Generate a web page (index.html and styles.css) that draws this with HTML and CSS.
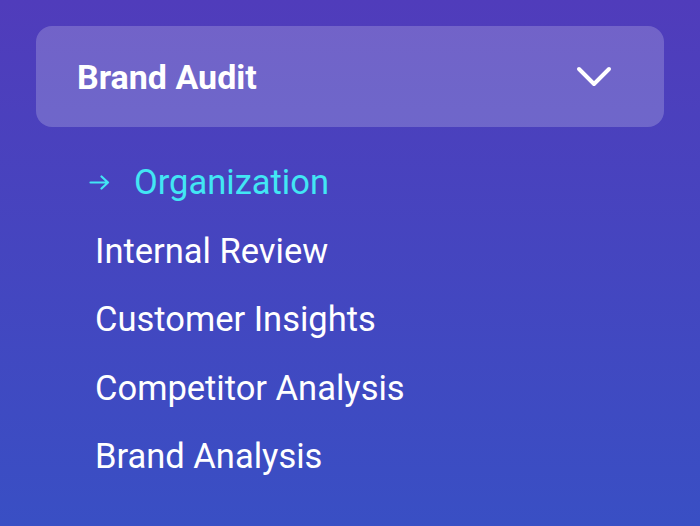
FILE: index.html
```html
<!DOCTYPE html>
<html lang="en">
<head>
<meta charset="utf-8">
<title>Brand Audit</title>
<link rel="stylesheet" href="styles.css">
</head>
<body>
<nav class="menu">
  <div class="menu-header">
    <span class="menu-title">Brand Audit</span>
    <svg class="chevron" width="38" height="24" viewBox="0 0 38 24" aria-hidden="true">
      <polyline points="4,4 19,19 34,4" fill="none" stroke="#ffffff" stroke-width="4" stroke-linecap="round" stroke-linejoin="round"/>
    </svg>
  </div>
  <ul class="menu-list">
    <li class="menu-item active">
      <svg class="arrow" width="21" height="15" viewBox="0 0 21 15" aria-hidden="true">
        <path d="M1.5 7.5 H19 M12.5 1.5 L19 7.5 L12.5 13.5" fill="none" stroke="#42e6f4" stroke-width="2.2" stroke-linecap="round" stroke-linejoin="round"/>
      </svg>
      <span>Organization</span>
    </li>
    <li class="menu-item"><span>Internal Review</span></li>
    <li class="menu-item"><span>Customer Insights</span></li>
    <li class="menu-item"><span>Competitor Analysis</span></li>
    <li class="menu-item"><span>Brand Analysis</span></li>
  </ul>
</nav>
</body>
</html>
```

FILE: styles.css
```css
html, body {
  margin: 0;
  padding: 0;
  height: 100%;
}

body {
  background: linear-gradient(180deg, #503cbb 0%, #394fc4 100%);
  font-family: Roboto, "Noto Sans", sans-serif;
  color: #ffffff;
  overflow: hidden;
}

.menu {
  padding: 26px 36px 0 36px;
}

.menu-header {
  display: flex;
  align-items: center;
  justify-content: space-between;
  height: 101px;
  padding: 0 51px 0 41px;
  border-radius: 16px;
  background: rgba(255, 255, 255, 0.2);
}

.menu-title {
  font-size: 34px;
  font-weight: 700;
  line-height: 1;
}

.chevron {
  display: block;
}

.menu-list {
  list-style: none;
  margin: 21px 0 0 0;
  padding: 0 0 0 59px;
}

.menu-item {
  display: flex;
  align-items: center;
  height: 68.5px;
  font-size: 34.5px;
  line-height: 1;
}

.menu-item.active {
  margin-left: -6px;
  color: #42e6f4;
  gap: 24px;
}

.arrow {
  display: block;
  flex: none;
}
```
